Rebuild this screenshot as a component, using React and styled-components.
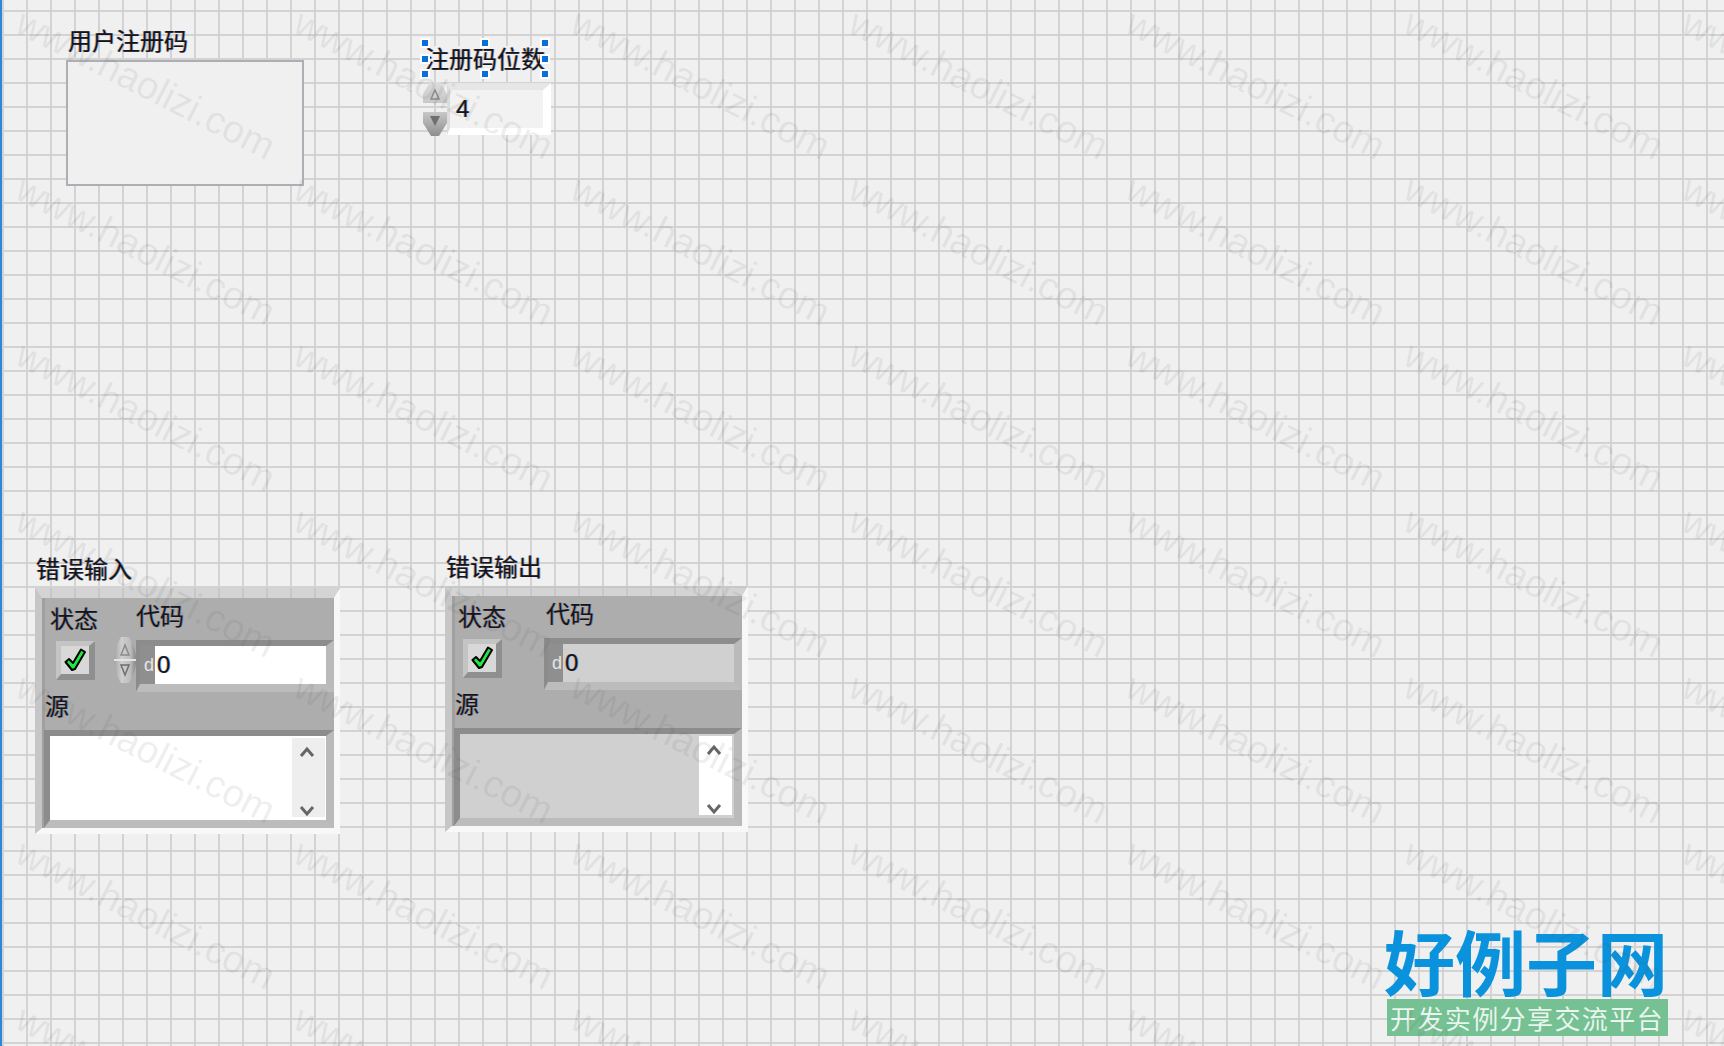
import React from "react";
import styled, { createGlobalStyle } from "styled-components";

const Global = createGlobalStyle`
  html, body { margin: 0; padding: 0; background: #f0f0f0; }
  #root { width: 1724px; height: 1046px; overflow: hidden; }
`;

const CJK = `"Noto Sans CJK SC", "Noto Sans", sans-serif`;

const Canvas = styled.div`
  position: relative;
  width: 1724px;
  height: 1046px;
  overflow: hidden;
  box-sizing: border-box;
  border-left: 2px solid #2b87d8;
  background-color: #f0f0f0;
  background-image:
    linear-gradient(90deg, #d3d3d3 2px, transparent 2px),
    linear-gradient(180deg, #d3d3d3 2px, transparent 2px);
  background-size: 24px 24px;
  background-position: 0 10px;
`;

const Node = styled.div`
  position: absolute;
  left: ${(p) => p.$x - 2}px;
  top: ${(p) => p.$y}px;
`;

const Label = styled.span`
  display: block;
  font-family: ${CJK};
  font-size: 24px;
  line-height: 24px;
  color: #14141e;
  white-space: nowrap;
  text-shadow: -0.7px 0 rgba(190, 110, 30, 0.6), 0.7px 0 rgba(30, 120, 220, 0.6);
`;

const StringPanel = styled.div`
  box-sizing: border-box;
  width: 238px;
  height: 126px;
  border: 2px solid #aeaeb4;
  background: #f0f0f0;
`;

const SelectedLabel = styled.div`
  position: relative;
  width: 120px;
  height: 24px;
  background: #f0f0f0;
`;

const Handle = styled.i`
  position: absolute;
  left: ${(p) => p.$x}px;
  top: ${(p) => p.$y}px;
  box-sizing: border-box;
  width: 10px;
  height: 10px;
  border: 2px solid #fff;
  background: #0a6fd8;
`;

const NumericRow = styled.div`
  display: flex;
  align-items: center;
`;

const Spin = styled.svg`
  display: block;
  flex: none;
  margin-top: ${(p) => p.$t || 0}px;
`;

const PlainNumeric = styled.div`
  box-sizing: border-box;
  width: 104px;
  height: 52px;
  border-style: solid;
  border-width: 7px 8px 7px 3px;
  border-color: #e6e6e6 #ffffff #ffffff #dcdcdc;
  background: #f2f2f2;
  display: flex;
  align-items: center;
  padding-left: 6px;
`;

const Digit = styled.span`
  font-family: "Liberation Sans", sans-serif;
  font-size: 24px;
  line-height: 24px;
  color: #14141e;
  text-shadow: -0.7px 0 rgba(190, 110, 30, 0.55), 0.7px 0 rgba(30, 120, 220, 0.65);
`;

const ClusterFrame = styled.div`
  box-sizing: border-box;
  width: ${(p) => p.$w}px;
  height: 246px;
  border-style: solid;
  border-width: 10px 6px 6px 7px;
  border-color: rgba(190, 190, 190, 0.55) #f8f8f8 #f8f8f8 #c6c6c6;
`;

const ClusterBody = styled.div`
  box-sizing: border-box;
  height: 100%;
  background: #adadad;
  border-left: 3px solid #a0a0a0;
  display: flex;
  flex-direction: column;
`;

const HeadRow = styled.div`
  height: 42px;
  position: relative;
  display: flex;
`;

const HeadLabel = styled.div`
  flex: none;
  width: ${(p) => p.$w}px;
  margin-left: ${(p) => p.$l}px;
  margin-top: ${(p) => p.$t}px;
`;

const ControlRow = styled.div`
  height: 52px;
  display: flex;
  align-items: flex-start;
`;

const CheckButton = styled.div`
  box-sizing: border-box;
  flex: none;
  width: 39px;
  height: 39px;
  margin-left: ${(p) => p.$l}px;
  margin-top: 1px;
  border-style: solid;
  border-width: 5px 6px 6px 5px;
  border-color: #c4c4c4 #8f8f8f #8f8f8f #c4c4c4;
  background: #d8d8d8;
  display: flex;
  align-items: center;
  justify-content: center;
`;

const Gap = styled.div`
  flex: none;
  width: ${(p) => p.$w}px;
`;

const NumericBox = styled.div`
  box-sizing: border-box;
  flex: none;
  width: 198px;
  height: 52px;
  border-style: solid;
  border-width: 6px 8px 8px 4px;
  border-color: #8c8c8c #bababa #bcbcbc #8c8c8c;
  display: flex;
  background: ${(p) => p.$fill};
`;

const Radix = styled.div`
  box-sizing: border-box;
  flex: none;
  width: 15px;
  background: #8f8f8f;
  color: #e6e6e6;
  font-family: "Liberation Sans", sans-serif;
  font-size: 18px;
  line-height: 38px;
  text-align: right;
  padding-right: 1px;
`;

const NumericValue = styled.div`
  padding-left: 2px;
  line-height: 38px;
  display: flex;
  align-items: center;
`;

const SourceRow = styled.div`
  height: 38px;
  box-sizing: border-box;
  padding: 1px 0 0 0;
`;

const StringBox = styled.div`
  box-sizing: border-box;
  flex: 1;
  margin-left: ${(p) => p.$l}px;
  border-style: solid;
  border-width: 6px 8px 8px 6px;
  border-color: #8c8c8c #bababa #bcbcbc #8c8c8c;
  background: ${(p) => p.$fill};
  display: flex;
  justify-content: flex-end;
  padding: 2px ${(p) => p.$r}px 3px 0;
`;

const ScrollTrack = styled.div`
  box-sizing: border-box;
  width: 33px;
  background: ${(p) => p.$fill};
  display: flex;
  flex-direction: column;
  align-items: center;
  justify-content: space-between;
  padding: 8px 4px 0 0;
`;

const Watermarks = styled.div`
  position: absolute;
  left: 26px;
  top: 2px;
  display: grid;
  grid-template-columns: repeat(7, 277.6px);
  grid-auto-rows: 166px;
  pointer-events: none;
  z-index: 5;
`;

const Mark = styled.span`
  display: block;
  font-family: "Liberation Sans", sans-serif;
  font-size: 38.5px;
  line-height: 40px;
  color: rgba(80, 80, 80, 0.1);
  white-space: nowrap;
  transform-origin: 0 0;
  transform: rotate(27deg);
`;

const Logo = styled.div`
  position: absolute;
  left: 1383px;
  top: 922px;
  width: 283px;
  display: flex;
  flex-direction: column;
  align-items: flex-end;
`;

const LogoTitle = styled.div`
  font-family: ${CJK};
  font-weight: 700;
  font-size: 71px;
  line-height: 74px;
  margin-bottom: 3px;
  color: #0a93dc;
  white-space: nowrap;
`;

const LogoBar = styled.div`
  box-sizing: border-box;
  width: 281px;
  height: 37px;
  background: #75c193;
  color: rgba(255, 255, 255, 0.85);
  font-family: ${CJK};
  font-size: 26px;
  line-height: 37px;
  letter-spacing: 1.4px;
  padding-left: 3px;
  white-space: nowrap;
`;

const Chevron = ({ up }) => (
  <svg width="16" height="12" viewBox="0 0 16 12">
    <path d={up ? "M2 10 L8 3 L14 10" : "M2 2 L8 9 L14 2"} fill="none" stroke="#666" strokeWidth="3" />
  </svg>
);

const Check = () => (
  <svg width="22" height="24" viewBox="0 0 22 24">
    <path d="M1.5 14 L5 11 L9 15 L17 1.5 L21 4 L11 21 L8 22 Z" fill="#1fe840" stroke="#000" strokeWidth="2" strokeLinejoin="round" />
  </svg>
);

const OvalSpinner = ({ id }) => (
  <Spin $t={-3} width="22" height="46" viewBox="0 0 22 46">
    <defs>
      <linearGradient id={id} x1="0" x2="1" y1="0" y2="0">
        <stop offset="0" stopColor="#a4a4a4" />
        <stop offset="0.35" stopColor="#cfcfcf" />
        <stop offset="0.75" stopColor="#bcbcbc" />
        <stop offset="1" stopColor="#858585" />
      </linearGradient>
    </defs>
    <path d="M7 0 H15 Q22 10 22 23 Q22 36 15 46 H7 Q0 36 0 23 Q0 10 7 0 Z" fill={`url(#${id})`} />
    <rect x="0" y="22" width="22" height="2" fill="#e4e4e4" />
    <path d="M11 8 L15 18 H7 Z" fill="none" stroke="#8a8a8a" strokeWidth="1.5" />
    <path d="M11 38 L15 28 H7 Z" fill="none" stroke="#6e6e6e" strokeWidth="1.5" />
  </Spin>
);

const StackSpinner = ({ id }) => (
  <Spin width="24" height="54" viewBox="0 0 24 54">
    <defs>
      <linearGradient id={id} x1="0" x2="0" y1="0" y2="1">
        <stop offset="0" stopColor="#dcdcdc" />
        <stop offset="0.45" stopColor="#c4c4c4" />
        <stop offset="0.55" stopColor="#c8c8c8" />
        <stop offset="1" stopColor="#8e8e8e" />
      </linearGradient>
    </defs>
    <path d="M7 0 H17 L24 12 V21 H0 V12 Z M0 30 H24 V41 L16 54 H8 L0 41 Z" fill={`url(#${id})`} />
    <path d="M12 8 L16 17 H8 Z" fill="none" stroke="#8a8a8a" strokeWidth="1.5" />
    <path d="M7 34 H17 L12 44 Z" fill="#6e6e6e" />
  </Spin>
);

const Cluster = ({ id, w, fill, scroll, stateTop, codeTop, stateL, codeL, btnL, strL, strR, spinner, boxGap }) => (
  <ClusterFrame $w={w}>
    <ClusterBody>
      <HeadRow>
        <HeadLabel $w={48} $l={stateL} $t={stateTop}><Label>状态</Label></HeadLabel>
        <HeadLabel $w={48} $l={codeL} $t={codeTop}><Label>代码</Label></HeadLabel>
      </HeadRow>
      <ControlRow>
        <CheckButton $l={btnL}><Check /></CheckButton>
        {spinner ? (
          <>
            <Gap $w={19} />
            <OvalSpinner id={id} />
          </>
        ) : (
          <Gap $w={boxGap} />
        )}
        <NumericBox $fill={fill}>
          <Radix>d</Radix>
          <NumericValue><Digit>0</Digit></NumericValue>
        </NumericBox>
      </ControlRow>
      <SourceRow><Label>源</Label></SourceRow>
      <StringBox $fill={fill} $l={strL} $r={strR}>
        <ScrollTrack $fill={scroll}>
          <Chevron up />
          <Chevron />
        </ScrollTrack>
      </StringBox>
    </ClusterBody>
  </ClusterFrame>
);

export default function App() {
  const marks = Array.from({ length: 49 }, (_, i) => i);
  return (
    <Canvas>
      <Global />

      <Node $x={68} $y={28}><Label>用户注册码</Label></Node>
      <Node $x={66} $y={60}><StringPanel /></Node>

      <Node $x={425} $y={46}>
        <SelectedLabel>
          <Label>注册码位数</Label>
          <Handle $x={-5} $y={-8} />
          <Handle $x={55} $y={-8} />
          <Handle $x={115} $y={-8} />
          <Handle $x={-5} $y={8} />
          <Handle $x={115} $y={8} />
          <Handle $x={-5} $y={23} />
          <Handle $x={55} $y={23} />
          <Handle $x={115} $y={23} />
        </SelectedLabel>
      </Node>
      <Node $x={423} $y={82}>
        <NumericRow>
          <StackSpinner id="spin-top" />
          <PlainNumeric><Digit>4</Digit></PlainNumeric>
        </NumericRow>
      </Node>

      <Node $x={36} $y={556}><Label>错误输入</Label></Node>
      <Node $x={35} $y={588}>
        <Cluster id="spin-a" w={305} fill="#ffffff" scroll="#eeeeee" stateTop={8} codeTop={5} stateL={5} codeL={38} btnL={11} strL={-1} strR={1} spinner />
      </Node>

      <Node $x={446} $y={554}><Label>错误输出</Label></Node>
      <Node $x={445} $y={586}>
        <Cluster id="spin-b" w={303} fill="#d0d0d0" scroll="#ffffff" stateTop={8} codeTop={5} stateL={3} codeL={40} btnL={8} strL={-1} strR={2} boxGap={42} />
      </Node>

      <Logo>
        <LogoTitle>好例子网</LogoTitle>
        <LogoBar>开发实例分享交流平台</LogoBar>
      </Logo>

      <Watermarks>
        {marks.map((i) => (
          <Mark key={i}>www.haolizi.com</Mark>
        ))}
      </Watermarks>
    </Canvas>
  );
}
